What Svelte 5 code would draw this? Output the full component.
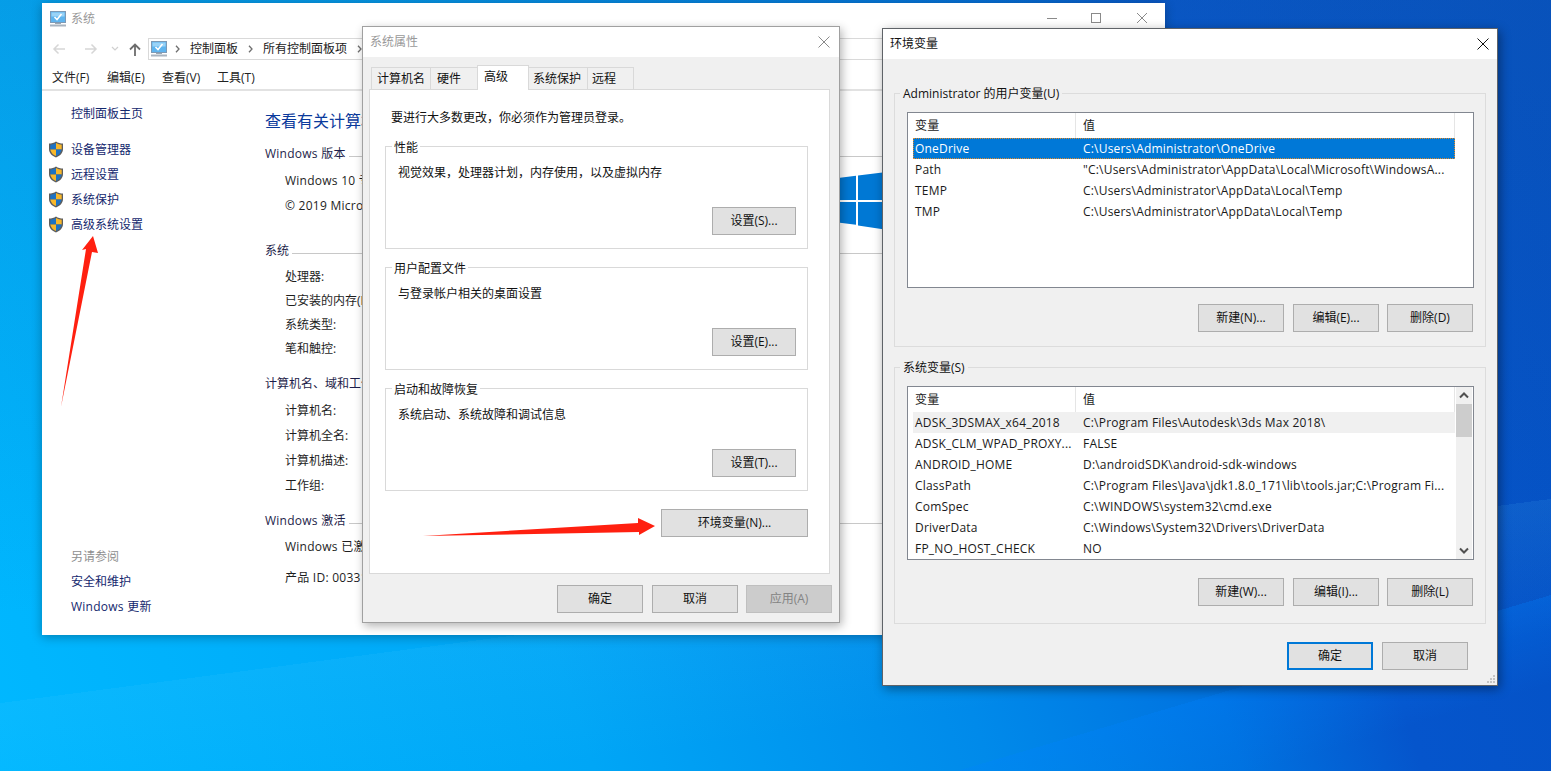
<script>
  const sideTop = ['设备管理器', '远程设置', '系统保护', '高级系统设置'];
  const sections = [
    { title: '系统', cls: 'r24', items: ['处理器:', '已安装的内存(RAM):', '系统类型:', '笔和触控:'], line: true },
    { title: '计算机名、域和工作组设置', cls: 'r25', items: ['计算机名:', '计算机全名:', '计算机描述:', '工作组:'], line: false },
  ];
  const perf = [
    { t: '性能', d: '视觉效果，处理器计划，内存使用，以及虚拟内存', b: '设置(S)...' },
    { t: '用户配置文件', d: '与登录帐户相关的桌面设置', b: '设置(E)...' },
    { t: '启动和故障恢复', d: '系统启动、系统故障和调试信息', b: '设置(T)...' },
  ];
  const tabs = [
    { t: '计算机名', w: 60, p: 5 }, { t: '硬件', w: 48, p: 6 }, { t: '高级', w: 52, p: 6, on: true }, { t: '系统保护', w: 60, p: 4 }, { t: '远程', w: 47, p: 4 },
  ];
  const userVars = [
    ['OneDrive', 'C:\\Users\\Administrator\\OneDrive'],
    ['Path', '"C:\\Users\\Administrator\\AppData\\Local\\Microsoft\\WindowsA...'],
    ['TEMP', 'C:\\Users\\Administrator\\AppData\\Local\\Temp'],
    ['TMP', 'C:\\Users\\Administrator\\AppData\\Local\\Temp'],
  ];
  const sysVars = [
    ['ADSK_3DSMAX_x64_2018', 'C:\\Program Files\\Autodesk\\3ds Max 2018\\'],
    ['ADSK_CLM_WPAD_PROXY...', 'FALSE'],
    ['ANDROID_HOME', 'D:\\androidSDK\\android-sdk-windows'],
    ['ClassPath', 'C:\\Program Files\\Java\\jdk1.8.0_171\\lib\\tools.jar;C:\\Program Fi...'],
    ['ComSpec', 'C:\\WINDOWS\\system32\\cmd.exe'],
    ['DriverData', 'C:\\Windows\\System32\\Drivers\\DriverData'],
    ['FP_NO_HOST_CHECK', 'NO'],
  ];
</script>

{#snippet monitor(w, h)}
  <svg class="mon" width={w} height={h} viewBox="0 0 16 16">
    <rect x="0.5" y="0.5" width="15" height="11" fill="#5fb4ee" stroke="#7d99b5" />
    <rect x="1.5" y="1.5" width="13" height="4" fill="#9ad3f7" />
    <path d="M4.5 6 L7 8.5 L11.5 3" fill="none" stroke="#fff" stroke-width="1.6" />
    <rect x="5" y="12" width="6" height="1" fill="#9aa7b3" />
    <rect x="0" y="13.5" width="16" height="2" fill="#a9b4bf" />
  </svg>
{/snippet}

{#snippet shield()}
  <svg class="shield" width="16" height="17" viewBox="0 0 16 17">
    <path d="M8 .5 C10 2 12.500 2.500 15 2.500 V8 C15 12 12 15 8 16.500 C4 15 1 12 1 8 V2.500 C3.500 2.500 6 2 8 .5Z" fill="#5d5d5d" />
    <path d="M8 2 C6.200 3 4.200 3.600 2.300 3.800 V8.500 H8Z" fill="#1d72c4" />
    <path d="M8 2 C9.800 3 11.800 3.600 13.700 3.800 V8.500 H8Z" fill="#f8b72a" />
    <path d="M2.300 8.500 H8 V15 C5 13.800 2.800 11.500 2.300 8.500Z" fill="#f8b72a" />
    <path d="M13.700 8.500 H8 V15 C11 13.800 13.200 11.500 13.700 8.500Z" fill="#1d72c4" />
  </svg>
{/snippet}

{#snippet chev()}
  <svg class="chev" width="5" height="8" viewBox="0 0 5 8"><path d="M1 .8 L4 4 L1 7.200" fill="none" stroke="#6f6f6f" stroke-width="1.300" /></svg>
{/snippet}

{#snippet varList(rows, selected, hot, scroll)}
  <div class="list" class:tall={!scroll} class:short={scroll}>
    <div class="list-main">
      <div class="row head"><span class="c1">变量</span><span class="c2">值</span></div>
      {#each rows as r, i}
        <div class="row" class:sel={selected && i === 0} class:hot={hot && i === 0}>
          <span class="c1">{r[0]}</span><span class="c2">{r[1]}</span>
        </div>
      {/each}
    </div>
    {#if scroll}
      <div class="sb">
        <svg class="sb-arrow" width="16" height="14" viewBox="0 0 16 14"><path d="M4 9 L8 5 L12 9" fill="none" stroke="#505050" stroke-width="2" /></svg>
        <div class="sb-thumb"></div>
        <svg class="sb-arrow dn" width="16" height="14" viewBox="0 0 16 14"><path d="M4 5 L8 9 L12 5" fill="none" stroke="#505050" stroke-width="2" /></svg>
      </div>
    {/if}
  </div>
{/snippet}

<div class="desktop">
  <section class="win sys">
    <header class="sys-title">
      {@render monitor(16, 16)}
      <span class="t-gray">系统</span>
      <div class="ctrls">
        <svg width="12" height="12" viewBox="0 0 12 12"><path d="M1 6.500 H11" stroke="#8a8a8a" /></svg>
        <svg width="12" height="12" viewBox="0 0 12 12"><rect x="1.500" y="1.500" width="9" height="9" fill="none" stroke="#8a8a8a" /></svg>
        <svg width="12" height="12" viewBox="0 0 12 12"><path d="M1 1 L11 11 M11 1 L1 11" stroke="#8a8a8a" /></svg>
      </div>
    </header>
    <div class="nav">
      <svg class="n1" width="14" height="12" viewBox="0 0 14 12"><path d="M13 6 H2 M6.500 1.500 L2 6 L6.500 10.500" fill="none" stroke="#d6d6d6" stroke-width="1.500" /></svg>
      <svg class="n2" width="14" height="12" viewBox="0 0 14 12"><path d="M1 6 H12 M7.500 1.500 L12 6 L7.500 10.500" fill="none" stroke="#d6d6d6" stroke-width="1.500" /></svg>
      <svg class="n3" width="8" height="6" viewBox="0 0 8 6"><path d="M1 1 L4 4 L7 1" fill="none" stroke="#d0d0d0" stroke-width="1.200" /></svg>
      <svg class="n4" width="12" height="13" viewBox="0 0 12 13"><path d="M6 13 V2 M1 6.500 L6 1.500 L11 6.500" fill="none" stroke="#6d6d6d" stroke-width="1.800" /></svg>
      <div class="addr">
        {@render monitor(16, 16)}
        {@render chev()}<span>控制面板</span>
        {@render chev()}<span>所有控制面板项</span>
        {@render chev()}
      </div>
    </div>
    <nav class="menu"><span>文件(F)</span><span>编辑(E)</span><span>查看(V)</span><span>工具(T)</span></nav>
    <div class="sys-body">
      <aside class="side">
        <a class="home">控制面板主页</a>
        <div class="side-links">
          {#each sideTop as s}
            <div class="side-item">{@render shield()}<a>{s}</a></div>
          {/each}
        </div>
        <div class="see">
          <span class="see-t">另请参阅</span>
          <a>安全和维护</a>
          <a class="wide">Windows 更新</a>
        </div>
      </aside>
      <main class="main">
        <h1>查看有关计算机的基本信息</h1>
        <div class="sec first">
          <div class="sec-h"><span class="wide">Windows 版本</span><i></i></div>
          <div class="ver">
            <div class="items r25"><p class="wide">Windows 10 专业版</p><p class="wide">© 2019 Microsoft Corporation。</p></div>
            <svg class="winlogo" width="130" height="62" viewBox="0 0 130 62">
              <path d="M0 6 L18 3.800 V28 H0Z M20 3.500 L130 -10 V28 H20Z M0 30 H18 V52.800 L0 50.500Z M20 30 H130 V70 L20 53.500Z" fill="#0078d4" />
            </svg>
          </div>
        </div>
        {#each sections as s}
          <div class="sec">
            <div class="sec-h"><span>{s.title}</span>{#if s.line}<i></i>{/if}</div>
            <div class="items {s.cls}">{#each s.items as it}<p>{it}</p>{/each}</div>
          </div>
        {/each}
        <div class="sec">
          <div class="sec-h"><span class="wide">Windows 激活</span><i></i></div>
          <div class="items act"><p class="wide">Windows 已激活</p><p class="wide">产品 ID: 00331</p></div>
        </div>
      </main>
    </div>
  </section>

  <section class="win dlg">
    <header class="dlg-title">
      <span class="t-gray">系统属性</span>
      <svg width="12" height="12" viewBox="0 0 12 12"><path d="M.5 .5 L11.500 11.500 M11.500 .5 L.5 11.500" stroke="#8a8a8a" /></svg>
    </header>
    <div class="tabs">
      {#each tabs as t}
        <div class="tab" class:on={t.on} style:width="{t.w}px" style:padding-left="{t.p}px">{t.t}</div>
      {/each}
    </div>
    <div class="panel">
      <p class="intro">要进行大多数更改，你必须作为管理员登录。</p>
      {#each perf as g}
        <div class="grp">
          <span class="legend">{g.t}</span>
          <p class="grp-d">{g.d}</p>
          <button class="btn set">{g.b}</button>
        </div>
      {/each}
      <button class="btn envb">环境变量(N)...</button>
    </div>
    <div class="dlg-foot">
      <button class="btn">确定</button>
      <button class="btn">取消</button>
      <button class="btn off">应用(A)</button>
    </div>
  </section>

  <section class="win env">
    <header class="env-title">
      <span>环境变量</span>
      <svg width="12" height="12" viewBox="0 0 12 12"><path d="M.5 .5 L11.500 11.500 M11.500 .5 L.5 11.500" stroke="#111" /></svg>
    </header>
    <div class="env-body">
      <div class="egrp g1">
        <span class="legend">Administrator 的用户变量(U)</span>
        {@render varList(userVars, true, false, false)}
        <div class="ebtns"><button class="btn">新建(N)...</button><button class="btn">编辑(E)...</button><button class="btn">删除(D)</button></div>
      </div>
      <div class="egrp g2">
        <span class="legend">系统变量(S)</span>
        {@render varList(sysVars, false, true, true)}
        <div class="ebtns"><button class="btn">新建(W)...</button><button class="btn">编辑(I)...</button><button class="btn">删除(L)</button></div>
      </div>
      <div class="env-foot">
        <button class="btn def">确定</button>
        <button class="btn">取消</button>
      </div>
    </div>
    <svg class="grip" width="10" height="10" viewBox="0 0 10 10"><path d="M7 1h2v2H7z M4 4h2v2H4z M7 4h2v2H7z M1 7h2v2H1z M4 7h2v2H4z M7 7h2v2H7z" fill="#c4c4c4" /></svg>
  </section>

  <svg class="arrows" width="1551" height="771" viewBox="0 0 1551 771">
    <path d="M61 407 L86 249 L82 250 L93 236 L98 253 L92 252 Z" fill="#ff2010" />
    <path d="M423 536 L638 523 L638 518 L655 526 L639 535 L639 532 Z" fill="#ff2010" />
  </svg>
</div>

<style>
  :global(body) { margin: 0; }
  .desktop {
    position: relative;
    width: 1551px;
    height: 771px;
    overflow: hidden;
    font: 12px/20px "Open Sans", "Noto Sans CJK SC", sans-serif;
    color: #111;
    background:
      linear-gradient(163.5deg, rgba(0, 130, 255, 0) 85.7%, rgba(0, 130, 255, .28) 85.7%, rgba(0, 130, 255, 0) 93%),
      linear-gradient(172.5deg, rgba(90, 205, 255, 0) 72.1%, rgba(90, 205, 255, .1) 72.1%, rgba(90, 205, 255, 0) 86%),
      linear-gradient(180deg, rgba(25, 90, 160, .22), rgba(25, 90, 160, 0) 80%),
      linear-gradient(72deg, #00b8ff 0%, #00a6f6 33%, #008aea 55%, #0072e0 69%, #0555cc 79%, #0450c2 100%);
  }
  p { margin: 0; }
  a { color: #14286e; text-decoration: none; }
  .t-gray { color: #999; }
  .wide { letter-spacing: .25px; }

  .win { position: absolute; box-sizing: border-box; display: flex; flex-direction: column; }

  /* System window */
  .sys { left: 42px; top: 3px; width: 1123px; height: 632px; background: #fff; box-shadow: 0 2px 10px rgba(0, 0, 0, .3); }
  .sys-title { height: 33px; flex: none; box-sizing: border-box; display: flex; align-items: center; padding: 0 17px 2px 8px; gap: 5px; }
  .ctrls { margin-left: auto; margin-bottom: 2px; display: flex; gap: 34px; }
  .ctrls svg:first-child { margin-right: -2px; }
  .nav { height: 26px; flex: none; display: flex; align-items: center; padding-left: 10px; }
  .n2 { margin-left: 18px; }
  .n3 { margin-left: 13px; }
  .n4 { margin-left: 10px; }
  .addr {
    margin-left: 7px; height: 22px; width: 850px; box-sizing: border-box;
    border: 1px solid #d9d9d9; display: flex; align-items: center; padding-left: 2px; color: #1a1a1a;
  }
  .chev { margin: 0 10px; flex: none; }
  .addr .mon + .chev { margin: 0 10px 0 8px; }
  .menu {
    height: 29px; flex: none; box-sizing: border-box; display: flex; padding: 7px 0 0 10px;
    border-bottom: 2px solid #e2e2e2; line-height: 18px; color: #222;
  }
  .menu span { width: 55px; white-space: nowrap; }
  .sys-body { flex: 1; display: flex; min-height: 0; }
  .side { width: 223px; flex: none; box-sizing: border-box; padding: 13px 0 18px 29px; display: flex; flex-direction: column; }
  .home { line-height: 20px; }
  .side-links { margin-top: 13px; display: flex; flex-direction: column; margin-left: -23px; }
  .side-item { display: flex; align-items: center; gap: 7px; height: 25px; }
  .side-item a { line-height: 20px; }
  .see { margin-top: auto; display: flex; flex-direction: column; gap: 5px; }
  .see-t { color: #8f8f8f; }
  .main { flex: 1; padding: 18px 15px 0 0; min-width: 0; }
  h1 { margin: 0; font-size: 16px; font-weight: 400; line-height: 24px; color: #0a3a9c; }
  .sec { margin-top: 13px; }
  .sec.first { margin-top: 11px; }
  .sec:nth-of-type(2) { margin-top: 23px; }
  .sec-h { display: flex; line-height: 20px; color: #1e1e4a; gap: 3px; height: 20px; }
  .sec-h i { flex: 1; height: 1px; background: #c8c8c8; margin-top: 12px; }
  .items { padding-left: 20px; margin-top: 4px; color: #1e1e1e; }
  .items p { white-space: nowrap; }
  .r24 p { line-height: 24px; }
  .r25 p { line-height: 25px; }
  .act p { line-height: 24px; }
  .act p + p { margin-top: 7px; }
  .ver { display: flex; height: 54px; }
  .ver .items { width: 573px; box-sizing: border-box; flex: none; }
  .winlogo { flex: none; margin-top: 8px; overflow: visible; }

  /* Buttons */
  .btn {
    width: 86px; height: 28px; box-sizing: border-box; padding: 0;
    background: #e1e1e1; border: 1px solid #adadad; border-radius: 0;
    font: inherit; color: #111; flex: none;
  }
  .btn.off { background: #ccc; border-color: #bfbfbf; color: #838383; }
  .btn.def { border: 2px solid #0078d7; }

  /* System properties */
  .dlg { left: 362px; top: 26px; width: 478px; height: 597px; background: #f0f0f0; border: 1px solid #a0a0a0; box-shadow: 2px 3px 9px rgba(0, 0, 0, .3); }
  .dlg-title { height: 30px; flex: none; background: #fff; display: flex; align-items: center; justify-content: space-between; padding: 0 9px 0 7px; }
  .tabs { display: flex; height: 33px; padding-left: 9px; align-items: flex-end; flex: none; position: relative; z-index: 1; margin-bottom: -1px; }
  .tab { height: 23px; box-sizing: border-box; border: 1px solid #d9d9d9; margin-left: -1px; line-height: 22px; background: #f0f0f0; white-space: nowrap; }
  .tab.on { height: 25px; background: #fff; border-bottom: 0; position: relative; }
  .panel {
    width: 461px; height: 485px; box-sizing: border-box; margin-left: 6px; background: #fff; border: 1px solid #d9d9d9;
    padding: 18px 21px 0 15px; display: flex; flex-direction: column; flex: none;
  }
  .intro { padding-left: 6px; }
  .grp {
    height: 103px; box-sizing: border-box; border: 1px solid #d9d9d9; margin-top: 18px;
    display: flex; flex-direction: column; padding: 0 11px 13px 12px; flex: none;
  }
  .legend { background: inherit; width: fit-content; line-height: 18px; margin-top: -9px; padding: 0 2px; white-space: nowrap; }
  .grp .legend { background: #fff; margin-top: -8px; margin-left: -6px; }
  .grp-d { margin-top: 6px; }
  .set { margin-top: auto; align-self: flex-end; width: 84px; }
  .envb { margin-top: 18px; align-self: flex-end; width: 147px; }
  .dlg-foot { flex: none; display: flex; justify-content: flex-end; gap: 9px; padding: 11px 7px 0 0; }
  .dlg-foot .btn:last-child { margin-left: -1px; }

  /* Environment */
  .env { left: 882px; top: 28px; width: 616px; height: 658px; background: #f0f0f0; border: 1px solid #5f6368; box-shadow: 2px 3px 10px rgba(0, 0, 0, .4); }
  .env-title { height: 30px; flex: none; background: #fff; display: flex; align-items: center; justify-content: space-between; padding: 0 8px 0 7px; }
  .env-body { flex: 1; padding: 34px 11px 0 11px; display: flex; flex-direction: column; }
  .egrp { box-sizing: border-box; border: 1px solid #dcdcdc; padding: 0 12px; display: flex; flex-direction: column; background: #f0f0f0; flex: none; }
  .g1 { height: 254px; }
  .g2 { height: 257px; margin-top: 20px; }
  .egrp .legend { margin-left: -7px; padding: 0 3px; background: #f0f0f0; }
  .list { margin-top: 9px; box-sizing: border-box; border: 1px solid #828790; background: #fff; display: flex; padding-left: 5px; flex: none; width: 567px; overflow: hidden; }
  .tall { height: 176px; }
  .short { height: 174px; }
  .list-main { width: 542px; flex: none; }
  .row { display: grid; grid-template-columns: 170px 1fr; height: 21px; line-height: 21px; box-sizing: border-box; color: #1a1a1a; white-space: nowrap; letter-spacing: .2px; }
  .row span { overflow: hidden; }
  .c1 { padding-left: 2px; }
  .head { height: 25px; line-height: 25px; }
  .head .c1 { border-right: 1px solid #e5e5e5; width: 163px; box-sizing: border-box; }
  .list-main > .head { box-shadow: inset -1px 0 0 #e5e5e5; }
  .sel { background: #0078d7; color: #fff; outline: 1px dotted #e08a2a; outline-offset: -1px; }
  .hot { background: #f0f0f0; }
  .sb { width: 16px; margin-left: 1px; background: #f0f0f0; display: flex; flex-direction: column; flex: none; }
  .sb-arrow { height: 17px; flex: none; }
  .sb-thumb { height: 33px; background: #cdcdcd; }
  .dn { margin-top: auto; }
  .ebtns { margin-top: 16px; display: flex; gap: 8px; justify-content: flex-end; }
  .g2 .ebtns { margin-top: 18px; }
  .ebtns .btn:first-child { margin-right: 1px; }
  .env-foot { margin-top: 18px; display: flex; gap: 9px; padding-left: 393px; }
  .grip { position: absolute; right: 1px; bottom: 1px; }

  .arrows { position: absolute; left: 0; top: 0; pointer-events: none; }
</style>
